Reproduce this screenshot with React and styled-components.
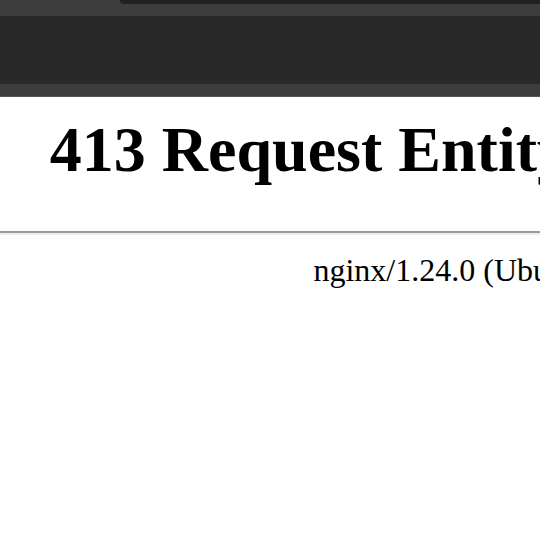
import styled, { createGlobalStyle } from "styled-components";

const Global = createGlobalStyle`
  html, body { margin: 0; padding: 0; background: #fff; overflow: hidden; }
  body { width: 540px; height: 540px; }
`;

const Chrome = styled.div`
  display: flex;
  flex-direction: column;
  width: 100%;
`;

const TopStrip = styled.div`
  height: 4px;
  background: #3d3d3d;
  display: flex;
`;

const Tab = styled.div`
  margin-left: 120px;
  flex: 1;
  background: #202221;
  border-bottom-left-radius: 8px;
`;

const Band = styled.div`
  height: ${(p) => p.h}px;
  background: ${(p) => p.bg};
`;

const Viewport = styled.div`
  width: 540px;
  overflow: hidden;
  font-family: "Liberation Serif", "Times New Roman", serif;
  color: #000;
`;

const Page = styled.div`
  width: 914px;
  padding-top: 16px;
`;

const Center = styled.div`
  text-align: center;
`;

const Title = styled.h1`
  font-size: 64px;
  font-weight: bold;
  margin: 0 0 44px;
  line-height: 74px;
`;

const Rule = styled.hr`
  margin: 0 0 17px;
  border: none;
  height: 2px;
  background: #9a9a9a;
  border-bottom: 2px solid #eeeeee;
  box-sizing: content-box;
`;

const Server = styled.div`
  font-size: 32px;
  line-height: 37px;
`;

export default function App() {
  return (
    <>
      <Global />
      <Chrome>
        <TopStrip>
          <Tab />
        </TopStrip>
        <Band h={12} bg="#3d3d3d" />
        <Band h={68} bg="#292929" />
        <Band h={12} bg="#3d3d3d" />
        <Band h={1} bg="#555555" />
      </Chrome>
      <Viewport>
        <Page>
          <Center>
            <Title>413 Request Entity Too Large</Title>
          </Center>
          <Rule />
          <Center>
            <Server>nginx/1.24.0 (Ubuntu)</Server>
          </Center>
        </Page>
      </Viewport>
    </>
  );
}
